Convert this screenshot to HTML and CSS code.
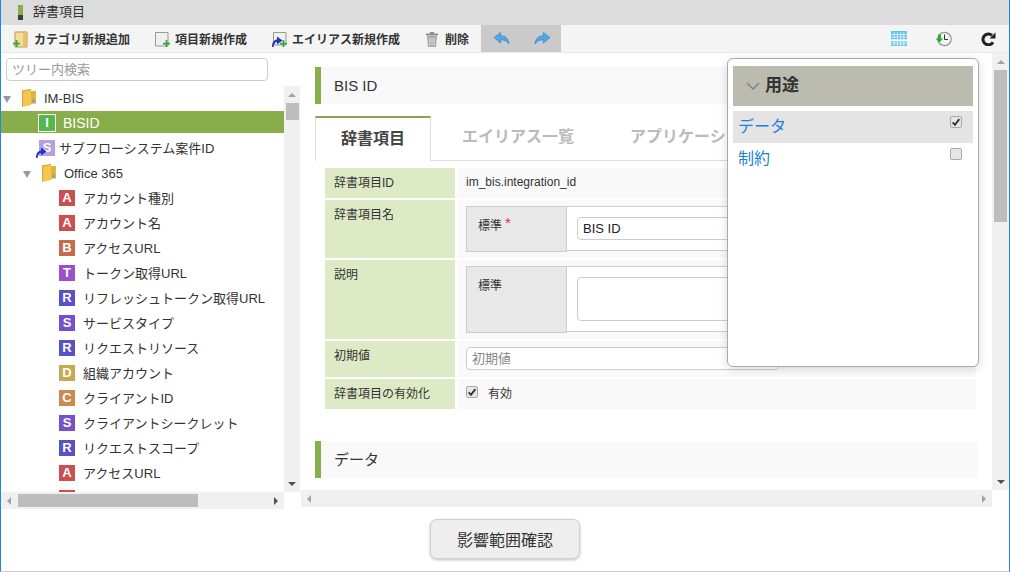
FILE: index.html
```html
<!DOCTYPE html>
<html lang="ja">
<head>
<meta charset="UTF-8">
<title>辞書項目</title>
<link rel="stylesheet" href="styles.css">
</head>
<body>
<svg class="defs" width="0" height="0">
  <symbol id="folder" viewBox="0 0 16 18">
    <path d="M1 1.500 L10 0 V2 H15 V14.500 H10 V16 L1 18 Z" fill="#f3c64f"/>
    <path d="M10 2 H15 V14.500 H10 Z" fill="#e3b23c"/>
    <path d="M1 1.500 L10 0 V1 L2 2.500 V17.500 L1 18 Z" fill="#d9a636"/>
    <path d="M12.500 9.500 L14 12.500 A1.600 1.600 0 0 1 11 12.500 Z" fill="#5aa9de"/>
  </symbol>
  <symbol id="plus" viewBox="0 0 8 8">
    <path d="M3 0 H5 V3 H8 V5 H5 V8 H3 V5 H0 V3 H3 Z" fill="#2eaa3a"/>
  </symbol>
  <symbol id="link" viewBox="0 0 12 12">
    <path d="M1 12 C1 7 3 5 6 4.500 V1.500 L11.500 5.500 L6 9.500 V7 C4 7 3 9 2.500 12 Z" fill="#2237b8"/>
  </symbol>
  <symbol id="check" viewBox="0 0 12 12">
    <path d="M2 6.500 L4.700 9.500 L10 2.500" fill="none" stroke="#333" stroke-width="2.200"/>
  </symbol>
</svg>

<div class="window">
  <div class="titlebar"><span class="title-mark"></span>辞書項目</div>

  <div class="toolbar">
    <a class="tool tool-first">
      <svg class="tool-icon" viewBox="0 0 18 18"><path d="M1 2 H13 V17 H1 Z" fill="#f6dc98" stroke="#b59a5a"/><path d="M9 2.500 H12.500 V16.500 H9 Z" fill="#e8c266"/></svg>
      <svg class="tool-plus" viewBox="0 0 8 8"><use href="#plus"/></svg>
      カテゴリ新規追加
    </a>
    <a class="tool">
      <svg class="tool-icon" viewBox="0 0 18 18"><path d="M0.500 2.500 H13 V16 H0.500 Z" fill="#f0f0f0" stroke="#999"/></svg>
      <svg class="tool-plus" viewBox="0 0 8 8"><use href="#plus"/></svg>
      項目新規作成
    </a>
    <a class="tool">
      <svg class="tool-icon" viewBox="0 0 18 18"><path d="M1.500 2.500 H14 V15 H1.500 Z" fill="#f0f0f0" stroke="#999"/><g transform="translate(-1 5)"><path d="M1 12 C1 7 3 5 6 4.500 V1.500 L11.500 5.500 L6 9.500 V7 C4 7 3 9 2.500 12 Z" fill="#2237b8"/></g></svg>
      <svg class="tool-plus" viewBox="0 0 8 8"><use href="#plus"/></svg>
      エイリアス新規作成
    </a>
    <a class="tool">
      <svg class="tool-icon" viewBox="0 0 18 18"><path d="M1 3.500 H13 V5.500 H1 Z M5 2 H9 V3.500 H5 Z" fill="#8d8d8d"/><path d="M2 6 H12 L11 17 H3 Z" fill="#a8a8a8"/><path d="M4.800 7.500 V15.500 M7 7.500 V15.500 M9.200 7.500 V15.500" stroke="#e0e0e0"/></svg>
      削除
    </a>
    <div class="history">
      <svg class="history-icon" viewBox="0 0 18 14"><path d="M8 0.500 V4 C13 4 16.500 6.500 17 13 C15 9.500 12.500 8.500 8 8.500 V12 L1 6 Z" fill="#4fa8e8" stroke="#2a78bd" stroke-width="0.600"/></svg>
      <svg class="history-icon" viewBox="0 0 18 14"><path d="M10 0.500 V4 C5 4 1.500 6.500 1 13 C3 9.500 5.500 8.500 10 8.500 V12 L17 6 Z" fill="#4fa8e8" stroke="#2a78bd" stroke-width="0.600"/></svg>
    </div>
    <div class="tool-right">
      <svg class="grid-icon" viewBox="0 0 16 15">
        <rect width="16" height="15" fill="#58c3ea"/>
        <path d="M0 3.500 H16 M0 6 H16 M0 8.500 H16 M0 11 H16 M0 13 H16 M3.200 1 V15 M6.400 1 V15 M9.600 1 V15 M12.800 1 V15" stroke="#eef4f6" stroke-width="0.800"/>
        <rect y="9" width="16" height="1" fill="#fff"/>
      </svg>
      <svg class="clock-icon" viewBox="0 0 17 16">
        <circle cx="9.500" cy="8" r="6.700" fill="#f2f4f2" stroke="#8a9a8e" stroke-width="1.200"/>
        <path d="M9.500 3.500 V8.500 H13" fill="none" stroke="#333"/>
        <path d="M3 3.500 H6 V7.500 H8 L4.500 11.500 L0.500 7.500 H3 Z" fill="#2cad36"/>
      </svg>
      <svg class="reload-icon" viewBox="0 0 15 14">
        <path d="M12 10.200 A5.400 5.400 0 1 1 11 3.400" fill="none" stroke="#222" stroke-width="3"/>
        <path d="M8.500 6.500 H14.500 V0.500 Z" fill="#222"/>
      </svg>
    </div>
  </div>

  <div class="panes">
    <div class="tree-pane">
      <div class="search-row"><input class="tree-search" type="text" placeholder="ツリー内検索"></div>
      <div class="tree-body">
        <div class="tree">
          <div class="node root"><i class="caret"></i><svg class="folder"><use href="#folder"/></svg>IM-BIS</div>
          <div class="node selected"><b class="badge badge-i">I</b>BISID</div>
          <div class="node alias"><span class="alias-wrap"><b class="badge badge-ls">S</b><svg class="alias-arrow"><use href="#link"/></svg></span>サブフローシステム案件ID</div>
          <div class="node sub"><i class="caret"></i><svg class="folder"><use href="#folder"/></svg>Office 365</div>
          <div class="node leaf"><b class="badge badge-a">A</b>アカウント種別</div>
          <div class="node leaf"><b class="badge badge-a">A</b>アカウント名</div>
          <div class="node leaf"><b class="badge badge-b">B</b>アクセスURL</div>
          <div class="node leaf"><b class="badge badge-t">T</b>トークン取得URL</div>
          <div class="node leaf"><b class="badge badge-r">R</b>リフレッシュトークン取得URL</div>
          <div class="node leaf"><b class="badge badge-s">S</b>サービスタイプ</div>
          <div class="node leaf"><b class="badge badge-r">R</b>リクエストリソース</div>
          <div class="node leaf"><b class="badge badge-d">D</b>組織アカウント</div>
          <div class="node leaf"><b class="badge badge-c">C</b>クライアントID</div>
          <div class="node leaf"><b class="badge badge-s">S</b>クライアントシークレット</div>
          <div class="node leaf"><b class="badge badge-r">R</b>リクエストスコープ</div>
          <div class="node leaf"><b class="badge badge-a">A</b>アクセスURL</div>
          <div class="node leaf"><b class="badge badge-a"></b></div>
        </div>
        <div class="vbar tree-vbar">
          <i class="arrow up"></i>
          <span class="thumb tree-thumb"></span>
          <i class="arrow down"></i>
        </div>
      </div>
      <div class="hbar tree-hbar">
        <i class="arrow left"></i>
        <span class="thumb tree-hthumb"></span>
        <i class="arrow right dark"></i>
      </div>
    </div>

    <div class="content-pane">
      <div class="content-row">
        <div class="content">
          <h2 class="section">BIS ID</h2>
          <div class="tabs">
            <div class="tab active">辞書項目</div>
            <div class="tab">エイリアス一覧</div>
            <div class="tab">アプリケーション一覧</div>
          </div>
          <div class="form">
            <div class="form-row row-id">
              <div class="form-label">辞書項目ID</div>
              <div class="form-value value-text">im_bis.integration_id</div>
            </div>
            <div class="form-row row-name">
              <div class="form-label">辞書項目名</div>
              <div class="form-value">
                <div class="locale">
                  <div class="locale-label">標準<span class="required">*</span></div>
                  <div class="locale-cell"><div class="field">BIS ID</div></div>
                </div>
              </div>
            </div>
            <div class="form-row row-desc">
              <div class="form-label">説明</div>
              <div class="form-value">
                <div class="locale">
                  <div class="locale-label">標準</div>
                  <div class="locale-cell"><div class="field field-area"></div></div>
                </div>
              </div>
            </div>
            <div class="form-row row-init">
              <div class="form-label">初期値</div>
              <div class="form-value"><div class="field field-init">初期値</div></div>
            </div>
            <div class="form-row row-enable">
              <div class="form-label">辞書項目の有効化</div>
              <div class="form-value value-check">
                <span class="checkbox"><svg><use href="#check"/></svg></span>有効
              </div>
            </div>
          </div>
          <h2 class="section section-data">データ</h2>
        </div>
        <div class="vbar main-vbar">
          <i class="arrow up"></i>
          <span class="thumb main-thumb"></span>
          <i class="arrow down"></i>
        </div>
      </div>
      <div class="hbar main-hbar">
        <i class="arrow left"></i>
        <i class="arrow right"></i>
      </div>
    </div>
  </div>

  <div class="footer"><button class="confirm" type="button">影響範囲確認</button></div>

  <div class="popover">
    <div class="popover-head">
      <svg class="chevron" viewBox="0 0 14 8"><path d="M1 1 L7 7 L13 1" fill="none" stroke="#85857c" stroke-width="1.500"/></svg>
      <span class="popover-title">用途</span>
    </div>
    <div class="popover-item on">データ<span class="checkbox"><svg><use href="#check"/></svg></span></div>
    <div class="popover-item">制約<span class="checkbox"></span></div>
  </div>
</div>
</body>
</html>
```

FILE: styles.css
```css
* {
  box-sizing: border-box;
}

body {
  margin: 0;
  background-color: #ffffff;
  color: #333333;
  font-family: "Liberation Sans", "Noto Sans CJK JP", sans-serif;
  font-size: 12px;
}

.defs {
  position: absolute;
}

.window {
  position: relative;
  display: flex;
  flex-direction: column;
  width: 1010px;
  height: 572px;
  border-left: 1px solid #1e88e5;
  border-right: 1px solid #1e88e5;
  border-bottom: 1px solid #cccccc;
  overflow: hidden;
}

/* title + toolbar */
.titlebar {
  display: flex;
  align-items: flex-start;
  height: 25px;
  padding-left: 17px;
  background-color: #dcdcdc;
  font-size: 13px;
  line-height: 23px;
}

.title-mark {
  width: 5px;
  height: 15px;
  margin: 5px 10px 0 0;
  background: linear-gradient(#88ad4b 70%, #3c4034 70%);
}

.toolbar {
  display: flex;
  align-items: center;
  height: 28px;
  background-color: #f4f4f4;
  border-bottom: 1px solid #e8e8e8;
}

.tool {
  position: relative;
  display: flex;
  align-items: center;
  height: 27px;
  margin-right: 25px;
  font-weight: bold;
  color: #333333;
}

.tool-first {
  margin-left: 13px;
}

.tool-icon {
  width: 18px;
  height: 18px;
  margin-right: 2px;
}

.tool-plus {
  position: absolute;
  left: -1px;
  top: 15px;
  width: 7px;
  height: 7px;
}

.tool:nth-child(2) .tool-plus {
  left: 8px;
}

.tool:nth-child(3) .tool-plus {
  left: 8px;
}

.tool:nth-child(4) {
  margin-right: 12px;
}

.history {
  display: flex;
  align-items: center;
  gap: 24px;
  width: 80px;
  height: 27px;
  padding-left: 12px;
  background-color: #cacaca;
}

.history-icon {
  width: 17px;
  height: 13px;
}

.tool-right {
  display: flex;
  align-items: center;
  margin-left: auto;
  padding-right: 13px;
}

.grid-icon {
  width: 16px;
  height: 15px;
  margin-right: 28px;
}

.clock-icon {
  width: 17px;
  height: 16px;
  margin-right: 29px;
}

.reload-icon {
  width: 15px;
  height: 14px;
}

/* panes */
.panes {
  display: flex;
  height: 456px;
}

.tree-pane {
  display: flex;
  flex-direction: column;
  width: 299px;
  flex: none;
}

.search-row {
  height: 33px;
  padding: 5px 0 0 5px;
}

.tree-search {
  display: block;
  width: 262px;
  height: 23px;
  padding: 0 5px;
  border: 1px solid #cccccc;
  border-radius: 4px;
  font-family: inherit;
  font-size: 13px;
}

.tree-search::placeholder {
  color: #999999;
}

.tree-body {
  display: flex;
  height: 406px;
}

.tree {
  width: 283px;
  overflow: hidden;
  font-size: 13px;
}

.node {
  display: flex;
  align-items: center;
  height: 22px;
  margin-bottom: 3px;
  padding-top: 4px;
  line-height: 22px;
  white-space: nowrap;
}

.root {
  padding-left: 2px;
}

.sub {
  padding-left: 22px;
}

.leaf {
  padding-left: 58px;
}

.selected {
  padding-top: 2px;
  padding-left: 37px;
  background-color: #88ad4b;
  color: #ffffff;
  font-size: 14px;
}

.alias {
  padding-left: 38px;
}

.caret {
  width: 0;
  height: 0;
  margin-right: 10px;
  border-top: 7px solid #8f9aa5;
  border-left: 4px solid transparent;
  border-right: 4px solid transparent;
}

.folder {
  width: 16px;
  height: 18px;
  margin: -2px 7px 0 0;
}

.badge {
  display: block;
  flex: none;
  width: 16px;
  height: 16px;
  margin: -2px 8px 0 0;
  color: #ffffff;
  font-size: 13px;
  line-height: 16px;
  text-align: center;
}

.selected .badge {
  width: 18px;
  height: 18px;
  margin: 0 7px 0 0;
  border: 1px solid #ffffff;
  line-height: 16px;
}

.alias .badge {
  margin: 0;
}

.alias-wrap {
  position: relative;
  display: block;
  margin: -2px 4px 0 0;
}

.alias-arrow {
  position: absolute;
  left: -4px;
  top: 6px;
  width: 12px;
  height: 12px;
}

.badge-i { background-color: #55b84f; }
.badge-ls { background-color: #b6a0e2; }
.badge-a { background-color: #c9504f; }
.badge-b { background-color: #c76a4e; }
.badge-t { background-color: #9a50c9; }
.badge-r { background-color: #5a50c9; }
.badge-s { background-color: #7750c9; }
.badge-d { background-color: #c9a84f; }
.badge-c { background-color: #c98b4f; }

.required {
  margin-left: 3px;
  color: #d9304f;
  font-size: 15px;
  line-height: 0;
  vertical-align: 2px;
}

/* scrollbars */
.vbar {
  display: flex;
  flex-direction: column;
  align-items: center;
  flex: none;
  background-color: #f0f0f0;
}

.hbar {
  display: flex;
  align-items: center;
  flex: none;
  height: 17px;
  background-color: #f0f0f0;
}

.thumb {
  display: block;
  background-color: #bdbdbd;
}

.arrow {
  display: block;
  width: 0;
  height: 0;
  flex: none;
}

.arrow.up {
  margin-top: 7px;
  border-bottom: 4px solid #a3a3a3;
  border-left: 4px solid transparent;
  border-right: 4px solid transparent;
}

.arrow.down {
  margin-top: auto;
  margin-bottom: 6px;
  border-top: 4px solid #505050;
  border-left: 4px solid transparent;
  border-right: 4px solid transparent;
}

.arrow.left {
  margin-left: 6px;
  border-right: 4px solid #a3a3a3;
  border-top: 4px solid transparent;
  border-bottom: 4px solid transparent;
}

.arrow.right {
  margin-left: auto;
  margin-right: 6px;
  border-left: 4px solid #a3a3a3;
  border-top: 4px solid transparent;
  border-bottom: 4px solid transparent;
}

.arrow.right.dark {
  border-left-color: #505050;
}

.tree-vbar {
  width: 16px;
}

.tree-thumb {
  width: 13px;
  height: 17px;
  margin: 6px 0 0 1px;
}

.tree-hbar {
  width: 283px;
}

.tree-hthumb {
  width: 180px;
  height: 13px;
  margin-left: 7px;
}

.main-vbar {
  width: 17px;
}

.main-thumb {
  width: 13px;
  height: 152px;
  margin-top: 6px;
}

.content-pane {
  display: flex;
  flex-direction: column;
  flex: 1;
  min-width: 0;
}

.content-row {
  display: flex;
  height: 437px;
}

.main-hbar {
  width: 691px;
  margin-left: 1px;
}

.content {
  flex: 1;
  min-width: 0;
  padding: 14px 14px 0 15px;
  overflow: hidden;
}

.section {
  height: 37px;
  margin: 0;
  padding-left: 13px;
  border-left: 6px solid #88ad4b;
  background-color: #f9f9f9;
  font-size: 15px;
  font-weight: normal;
  line-height: 37px;
}

.section-data {
  margin-top: 32px;
}

.tabs {
  display: flex;
  height: 45px;
  margin-top: 12px;
  border-bottom: 1px solid #dddddd;
  font-size: 16px;
  font-weight: bold;
  color: #bbbbbb;
}

.tab {
  flex: none;
  padding: 0 31px 0 31px;
  line-height: 41px;
  white-space: nowrap;
}

.tab.active {
  width: 116px;
  height: 45px;
  padding: 0;
  padding-left: 25px;
  border-top: 2px solid #88a64d;
  border-left: 1px solid #dddddd;
  border-right: 1px solid #dddddd;
  background-color: #ffffff;
  color: #444444;
}

.tab.active + .tab {
  margin-right: 25px;
}

.tab:last-child {
  padding-left: 0;
}

.form {
  display: flex;
  flex-direction: column;
  gap: 2px;
  margin: 7px 2px 0 10px;
}

.form-row {
  display: grid;
  grid-template-columns: 130px 1fr;
  gap: 2px;
}

.row-id { height: 30px; }
.row-name { height: 58px; }
.row-desc { height: 79px; }
.row-init { height: 36px; }
.row-enable { height: 30px; }

.form-label {
  padding: 6px 0 0 9px;
  background-color: #deeac6;
  line-height: 18px;
}

.form-value {
  padding: 6px 0 0 9px;
  background-color: #f9f9f9;
}

.value-text {
  line-height: 18px;
  padding-top: 5px;
}

.value-check {
  display: flex;
  align-items: center;
  padding: 0 0 4px 9px;
}

.value-check .checkbox {
  margin-right: 10px;
}

.locale {
  display: flex;
}

.locale-label {
  flex: none;
  width: 101px;
  padding: 10px 0 0 11px;
  border: 1px solid #cccccc;
  background-color: #e8e8e8;
  line-height: 18px;
}

.row-name .locale-label { height: 46px; }
.row-desc .locale-label { height: 67px; }

.locale-cell {
  flex: 1;
  padding: 10px 10px;
  border: 1px solid #cccccc;
  border-left: none;
  background-color: #ffffff;
}

.row-name .locale-cell { height: 45px; }
.row-desc .locale-cell { height: 66px; }

.field {
  height: 23px;
  padding: 0 5px;
  border: 1px solid #cccccc;
  border-radius: 4px;
  background-color: #ffffff;
  color: #222222;
  font-size: 13px;
  line-height: 21px;
}

.field-area {
  height: 44px;
}

.field-init {
  width: 313px;
  color: #888888;
}

.checkbox {
  display: block;
  flex: none;
  width: 12px;
  height: 12px;
  border: 1px solid #aaaaaa;
  border-radius: 2px;
  background-color: #e6e6e6;
}

.checkbox svg {
  display: block;
  width: 10px;
  height: 10px;
}

/* footer */
.footer {
  display: flex;
  justify-content: center;
  flex: 1;
  padding: 10px 0 0 0;
}

.confirm {
  width: 150px;
  height: 40px;
  border: 1px solid #d0d0d0;
  border-radius: 7px;
  background-color: #eeeeee;
  box-shadow: 0 1px 3px rgba(0, 0, 0, 0.25);
  color: #333333;
  font-family: inherit;
  font-size: 16px;
}

/* popover on top of the content */
.popover {
  position: absolute;
  left: 726px;
  top: 58px;
  width: 252px;
  height: 309px;
  padding: 7px 5px;
  border: 1px solid #aaaaaa;
  border-radius: 6px;
  background-color: #ffffff;
  box-shadow: 0 2px 10px rgba(0, 0, 0, 0.15);
}

.popover-head {
  display: flex;
  align-items: center;
  height: 40px;
  margin-bottom: 5px;
  padding-left: 13px;
  background-color: #bbbbb0;
  font-size: 17px;
  font-weight: bold;
}

.popover-title {
  line-height: 40px;
}

.chevron {
  width: 14px;
  height: 8px;
  margin-right: 5px;
}

.popover-item {
  display: flex;
  justify-content: space-between;
  align-items: flex-start;
  height: 32px;
  padding: 0 11px 0 5px;
  color: #1a82d8;
  font-size: 16px;
  line-height: 32px;
}

.popover-item .checkbox {
  margin-top: 5px;
}

.popover-item.on {
  background-color: #e4e4e4;
}
```
